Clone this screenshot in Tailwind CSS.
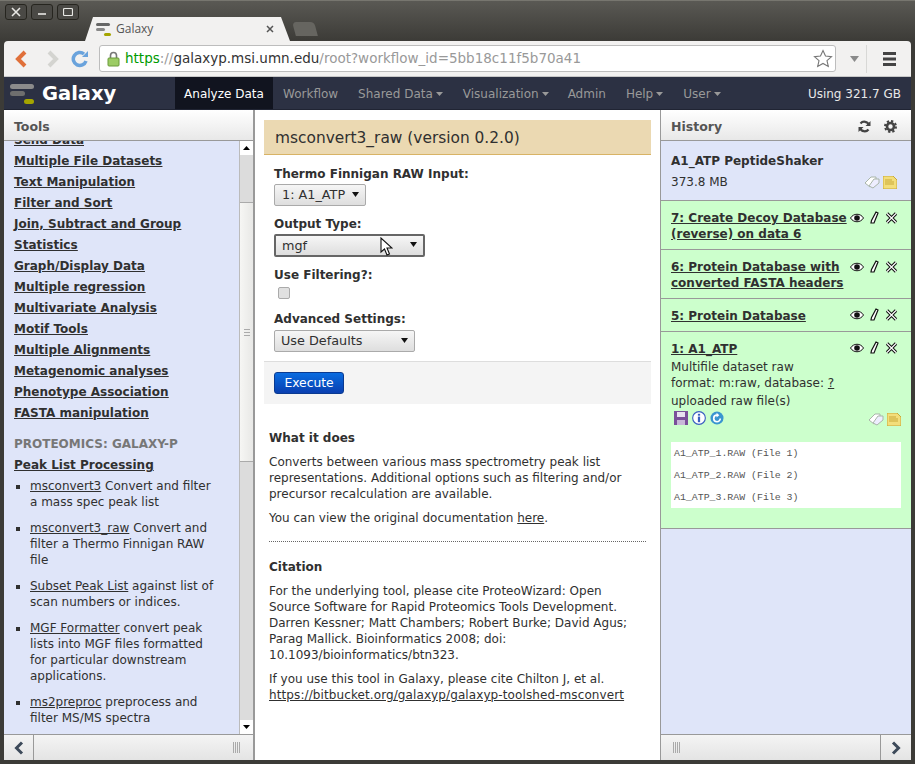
<!DOCTYPE html>
<html lang="en">
<head>
<meta charset="UTF-8"/>
<title>Galaxy</title>
<script src="https://cdn.jsdelivr.net/npm/@tailwindcss/browser@4"></script>
</head>
<body class="font-['DejaVu_Sans',sans-serif] text-[#303030] overflow-hidden">
<div class="relative w-[915px] h-[764px] bg-[#3c3b37] flex flex-col overflow-hidden">

  <!-- window title bar + tabs -->
  <div class="h-[41px] shrink-0 flex items-start pl-[5px] pt-[3px] bg-gradient-to-b from-[#5a5954] to-[#3c3b37] border-t border-[#77766f]">
    <div class="flex gap-[4px]">
      <button class="w-[22px] h-[16px] rounded-[3px] border border-[#26251f] bg-[#4a4945] flex items-center justify-center">
        <svg width="10" height="10" viewBox="0 0 10 10"><path d="M1 1L9 9M9 1L1 9" stroke="#e8e8e4" stroke-width="1.6"/></svg>
      </button>
      <button class="w-[22px] h-[16px] rounded-[3px] border border-[#26251f] bg-[#4a4945] flex items-center justify-center">
        <svg width="10" height="10" viewBox="0 0 10 10"><path d="M1 7H9" stroke="#e8e8e4" stroke-width="1.6"/></svg>
      </button>
      <button class="w-[22px] h-[16px] rounded-[3px] border border-[#26251f] bg-[#4a4945] flex items-center justify-center">
        <svg width="10" height="10" viewBox="0 0 10 10"><rect x="0.5" y="1.5" width="9" height="7" rx="1" fill="none" stroke="#e8e8e4" stroke-width="1.2"/></svg>
      </button>
    </div>
    <div class="ml-[6px] mt-[13px] w-[205px] h-[24px] bg-[#f2f1f0] [clip-path:polygon(8px_0,calc(100%-9px)_0,100%_100%,0_100%)] flex items-center pl-[11px] pr-[16px] text-[12px] text-[#555] font-['Open_Sans',sans-serif]">
      <svg width="16" height="16" viewBox="0 0 16 16"><rect x="0" y="2" width="14" height="3" rx="1.500" fill="#666"/><rect x="0" y="7" width="9" height="3" rx="1.500" fill="#888"/><rect x="8" y="12" width="7" height="3" rx="1.500" fill="#a5a500"/></svg>
      <span class="ml-[4px]">Galaxy</span>
      <svg class="ml-auto" width="8" height="8" viewBox="0 0 8 8"><path d="M1 1L7 7M7 1L1 7" stroke="#555" stroke-width="1.5"/></svg>
    </div>
    <div class="ml-[4px] mt-[18px] w-[22px] h-[14px] bg-[#666560] rounded-t-[4px] skew-x-[15deg]"></div>
  </div>

  <!-- browser toolbar -->
  <div class="ml-[4px] mr-[4px] h-[36px] shrink-0 bg-[#f2f1f0] rounded-t-[4px] flex items-center pl-[10px] border-b border-[#c8c8c8]">
    <svg width="16" height="18" viewBox="0 0 16 18"><path d="M11 2L4 9L11 16" fill="none" stroke="#e0703a" stroke-width="4"/></svg>
    <svg class="ml-[14px]" width="16" height="18" viewBox="0 0 16 18"><path d="M5 2L12 9L5 16" fill="none" stroke="#d4d4d0" stroke-width="4"/></svg>
    <svg class="ml-[11px]" width="18" height="18" viewBox="0 0 18 18"><path d="M15 11A6.500 6.500 0 1 1 13 4" fill="none" stroke="#6aa3dc" stroke-width="3.500"/><path d="M11 7L17 7L17 1Z" fill="#6aa3dc"/></svg>
    <div class="ml-[10px] w-[737px] h-[27px] bg-white border border-[#bdbdbd] rounded-[3px] flex items-center pl-[7px] pr-[2px] text-[13.500px] whitespace-nowrap">
      <svg width="13" height="16" viewBox="0 0 13 16"><path d="M3.500 7V4.500a3 3 0 0 1 6 0V7" fill="none" stroke="#777" stroke-width="1.600"/><rect x="1" y="7" width="11" height="8" rx="1" fill="#9ccc65" stroke="#6a9a3a"/></svg>
      <span class="ml-[5px] text-[#009a00]">https</span><span class="text-[#999]">://</span><span class="text-[#333]">galaxyp.msi.umn.edu</span><span class="text-[#999]">/root?workflow_id=5bb18c11f5b70a41</span>
      <svg class="ml-auto" width="20" height="19" viewBox="0 0 20 19"><path d="M10 1.500L12.500 7L18.500 7.600L14 11.600L15.300 17.500L10 14.500L4.700 17.500L6 11.600L1.500 7.600L7.500 7Z" fill="#fff" stroke="#777" stroke-width="1.100"/></svg>
    </div>
    <svg class="ml-[14px]" width="9" height="6" viewBox="0 0 9 6"><path d="M0 0H9L4.500 6Z" fill="#8a8a8a"/></svg>
    <div class="ml-[7px] w-px h-[28px] bg-[#d8d8d6]"></div>
    <svg class="ml-[16px]" width="13" height="14" viewBox="0 0 13 14"><path d="M0 0h13v3H0zM0 5.500h13v3H0zM0 11h13v3H0z" fill="#444"/></svg>
  </div>

  <div class="ml-[4px] mr-[4px] h-[647px] flex-1 flex flex-col bg-white min-h-0 overflow-hidden">
    <!-- masthead -->
    <nav class="h-[33px] shrink-0 bg-[#2c3143] flex items-stretch text-[12px] pt-px text-[#999] border-b border-[#202433]">
      <div class="w-[171px] flex items-center pl-[6px]">
        <svg width="25" height="23" viewBox="0 0 25 23"><rect x="0" y="2" width="24" height="5" rx="2.500" fill="#8b8b8b"/><rect x="0" y="9" width="15" height="5" rx="2.500" fill="#6e6e6e"/><rect x="14" y="17" width="10" height="5" rx="2.500" fill="#a5a500"/></svg>
        <span class="ml-[7px] text-[19.500px] font-bold text-white">Galaxy</span>
      </div>
      <a class="w-[98px] -mt-px bg-[#11141f] text-white flex items-center justify-center pt-px">Analyze Data</a>
      <a class="ml-[10px] flex items-center">Workflow</a>
      <a class="ml-[20px] flex items-center">Shared Data<svg class="ml-[3px]" width="7" height="4" viewBox="0 0 7 4"><path d="M0 0H7L3.500 4Z" fill="#999"/></svg></a>
      <a class="ml-[20px] flex items-center">Visualization<svg class="ml-[3px]" width="7" height="4" viewBox="0 0 7 4"><path d="M0 0H7L3.500 4Z" fill="#999"/></svg></a>
      <a class="ml-[19px] flex items-center">Admin</a>
      <a class="ml-[20px] flex items-center">Help<svg class="ml-[3px]" width="7" height="4" viewBox="0 0 7 4"><path d="M0 0H7L3.500 4Z" fill="#999"/></svg></a>
      <a class="ml-[20px] flex items-center">User<svg class="ml-[3px]" width="7" height="4" viewBox="0 0 7 4"><path d="M0 0H7L3.500 4Z" fill="#999"/></svg></a>
      <span class="ml-auto mr-[10px] flex items-center text-[#e8e8e8]">Using 321.7 GB</span>
    </nav>

    <div class="flex flex-1 min-h-0 text-[12px] leading-[16px]">
      <!-- tools panel -->
      <aside class="w-[251px] shrink-0 flex flex-col border-r-2 border-[#999]">
        <div class="h-[31px] shrink-0 bg-gradient-to-b from-white to-[#e8e8e8] border-b border-[#999] flex items-center pl-[10px] pt-[3px] text-[12.500px] font-bold text-[#555]">Tools</div>
        <div class="flex-1 min-h-0 flex bg-[#dfe5f9]">
          <div class="flex-1 min-w-0 overflow-hidden pl-[10px] pr-[19px]">
            <div class="-mt-[9px] flex flex-col font-bold gap-[5px] underline whitespace-nowrap">
              <a>Send Data</a>
              <a>Multiple File Datasets</a>
              <a>Text Manipulation</a>
              <a>Filter and Sort</a>
              <a>Join, Subtract and Group</a>
              <a>Statistics</a>
              <a>Graph/Display Data</a>
              <a>Multiple regression</a>
              <a>Multivariate Analysis</a>
              <a>Motif Tools</a>
              <a>Multiple Alignments</a>
              <a>Metagenomic analyses</a>
              <a>Phenotype Association</a>
              <a>FASTA manipulation</a>
            </div>
            <div class="mt-[15px] font-bold text-[#777]">PROTEOMICS: GALAXY-P</div>
            <a class="block mt-[5px] font-bold underline">Peak List Processing</a>
            <ul class="mt-[5px] flex flex-col gap-[10px] list-[square] pl-[16px]">
              <li><a class="underline">msconvert3</a> Convert and filter a mass spec peak list</li>
              <li><a class="underline">msconvert3_raw</a> Convert and filter a Thermo Finnigan RAW file</li>
              <li><a class="underline">Subset Peak List</a> against list of scan numbers or indices.</li>
              <li><a class="underline">MGF Formatter</a> convert peak lists into MGF files formatted for particular downstream applications.</li>
              <li><a class="underline">ms2preproc</a> preprocess and filter MS/MS spectra</li>
            </ul>
          </div>
          <!-- scrollbar -->
          <div class="w-[14px] shrink-0 flex flex-col bg-[#dcdcdc] border-l border-[#bbb]">
            <div class="h-[14px] bg-white flex items-center justify-center"><svg width="7" height="4" viewBox="0 0 7 4"><path d="M0 4H7L3.500 0Z" fill="#000"/></svg></div>
            <div class="h-[47px]"></div>
            <div class="h-[260px] bg-gradient-to-r from-[#f6f6f4] to-[#e8e8e6] border-y border-[#aaa] flex items-center justify-center">
              <svg width="6" height="7" viewBox="0 0 6 7"><path d="M0 .5H6M0 3.500H6M0 6.500H6" stroke="#aaa"/></svg>
            </div>
            <div class="flex-1"></div>
            <div class="h-[14px] bg-white flex items-center justify-center"><svg width="7" height="4" viewBox="0 0 7 4"><path d="M0 0H7L3.500 4Z" fill="#000"/></svg></div>
          </div>
        </div>
        <div class="h-[26px] shrink-0 flex bg-gradient-to-b from-[#f4f4f4] to-[#e4e4e4] border-t border-[#999]">
          <div class="w-[30px] flex items-center justify-center border-r border-[#999]">
            <svg width="10" height="14" viewBox="0 0 10 14"><path d="M8 1.500L2.500 7L8 12.500" fill="none" stroke="#3d4a5a" stroke-width="3"/></svg>
          </div>
          <div class="flex-1 flex items-center justify-end pr-[12px]"><svg width="8" height="11" viewBox="0 0 8 11"><path d="M.5 0V11M2.500 0V11M4.500 0V11M6.500 0V11" stroke="#aaa"/></svg></div>
        </div>
      </aside>

      <!-- center panel -->
      <main class="flex-1 min-w-0 pl-[9px] pr-[9px] pt-[10px] bg-white border-r border-[#999]">
        <h1 class="h-[35px] bg-[#ebd9b2] border-b border-[#d8b365] pl-[11px] pt-[2px] flex items-center text-[15.400px]">msconvert3_raw (version 0.2.0)</h1>
        <form class="pl-[10px] pt-[11px]">
          <label class="block font-bold">Thermo Finnigan RAW Input:</label>
          <div class="relative mt-[2px] w-[92px] h-[22px]">
            <select class="w-full h-full appearance-none rounded-[2px] border border-[#aaa] bg-gradient-to-b from-[#f6f6f6] to-[#dedede] pl-[7px] text-[12.800px]"><option>1: A1_ATP</option></select>
            <svg class="absolute right-[7px] top-[8px]" width="7" height="5" viewBox="0 0 7 5"><path d="M0 0H7L3.500 5Z" fill="#111"/></svg>
          </div>
          <label class="block font-bold mt-[10px]">Output Type:</label>
          <div class="relative mt-[2px] w-[151px] h-[23px]">
            <select class="w-full h-full appearance-none rounded-[2px] border-2 border-[#666] bg-gradient-to-b from-[#f6f6f6] to-[#dedede] pl-[6px] text-[12.800px]"><option>mgf</option></select>
            <svg class="absolute right-[8px] top-[8px]" width="7" height="5" viewBox="0 0 7 5"><path d="M0 0H7L3.500 5Z" fill="#111"/></svg>
          </div>
          <label class="block font-bold mt-[10px]">Use Filtering?:</label>
          <div class="mt-[4px] pl-[4px] h-[12px]"><input type="checkbox" class="block w-[12px] h-[12px] appearance-none rounded-[2px] border border-[#aaa] bg-[#e0e0e0]"/></div>
          <label class="block font-bold mt-[12px]">Advanced Settings:</label>
          <div class="relative mt-[3px] w-[141px] h-[22px]">
            <select class="w-full h-full appearance-none rounded-[2px] border border-[#aaa] bg-gradient-to-b from-[#f6f6f6] to-[#dedede] pl-[6px] text-[12.800px]"><option>Use Defaults</option></select>
            <svg class="absolute right-[7px] top-[8px]" width="7" height="5" viewBox="0 0 7 5"><path d="M0 0H7L3.500 5Z" fill="#111"/></svg>
          </div>
        </form>
        <div class="mt-[9px] h-[43px] bg-[#f4f4f4] border-t border-[#ddd] pl-[10px] pt-[10px]">
          <button class="w-[70px] h-[22px] rounded-[3px] bg-gradient-to-b from-[#0a6ce0] to-[#0a3fb0] border border-[#0a3a90] text-white text-[12.300px]">Execute</button>
        </div>
        <div class="pl-[5px] pr-[5px]">
          <h2 class="mt-[26px] font-bold">What it does</h2>
          <p class="mt-[8px]">Converts between various mass spectrometry peak list representations. Additional options such as filtering and/or precursor recalculation are available.</p>
          <p class="mt-[8px]">You can view the original documentation <a class="underline">here</a>.</p>
          <div class="mt-[15px] border-t border-dotted border-[#666]"></div>
          <h2 class="mt-[17px] font-bold">Citation</h2>
          <p class="mt-[8px]">For the underlying tool, please cite ProteoWizard: Open Source Software for Rapid Proteomics Tools Development. Darren Kessner; Matt Chambers; Robert Burke; David Agus; Parag Mallick. Bioinformatics 2008; doi: 10.1093/bioinformatics/btn323.</p>
          <p class="mt-[8px]">If you use this tool in Galaxy, please cite Chilton J, et al. <a class="underline tracking-[0.1px]">https://bitbucket.org/galaxyp/galaxyp-toolshed-msconvert</a></p>
        </div>
      </main>

      <!-- history panel -->
      <aside class="w-[250px] shrink-0 flex flex-col">
        <div class="h-[31px] shrink-0 bg-gradient-to-b from-white to-[#e8e8e8] border-b border-[#999] flex items-center pl-[10px] pt-[3px] pr-[14px] text-[12.500px] font-bold text-[#555]">
          History
          <svg class="ml-auto" width="13" height="13" viewBox="0 0 13 13"><path d="M11 5A5 5 0 0 0 2.500 3.500M2 8A5 5 0 0 0 10.500 9.500" fill="none" stroke="#444" stroke-width="2.200"/><path d="M12.500 1V6H7.500ZM.5 12V7H5.500Z" fill="#444"/></svg>
          <svg class="ml-[13px]" width="13" height="13" viewBox="0 0 13 13"><circle cx="6.500" cy="6.500" r="3.500" fill="none" stroke="#444" stroke-width="2.600"/><circle cx="6.500" cy="6.500" r="5.500" fill="none" stroke="#444" stroke-width="2" stroke-dasharray="2.300 2"/></svg>
        </div>
        <div class="flex-1 min-h-0 bg-[#dfe5f9] flex flex-col">
          <div class="h-[60px] shrink-0 px-[10px] pt-[12px] relative border-b border-[#999]">
            <div class="font-bold">A1_ATP PeptideShaker</div>
            <div class="mt-[5px] flex items-center h-[16px]">373.8 MB
              <svg class="ml-auto" width="16" height="13" viewBox="0 0 16 13"><path d="M1 7L7 1H12V5L6 11Z" fill="#fff" stroke="#a9b5a9"/><path d="M5 10L10 3H15V7L9 12Z" fill="#eef" stroke="#a9b5a9"/></svg>
              <svg class="ml-[3px]" width="14" height="13" viewBox="0 0 14 13"><path d="M0 0H10L14 4V13H0Z" fill="#f3de7b" stroke="#c9a93a"/><path d="M2 4H9M2 6H11M2 8H11" stroke="#c9a93a"/></svg>
              <span class="w-[4px]"></span>
            </div>
          </div>
          <div class="h-[49px] shrink-0 bg-[#ccffcc] border-b border-[#999] pl-[10px] pt-[9px] flex items-start">
            <a class="font-bold underline w-[179px] shrink-0">7: Create Decoy Database (reverse) on data 6</a>
            <div class="flex items-center gap-[6px] pt-px">
              <svg width="14" height="10" viewBox="0 0 14 10"><path d="M.5 5C3.500 0 10.500 0 13.500 5C10.500 10 3.500 10 .5 5Z" fill="#fff" stroke="#111"/><circle cx="7" cy="5" r="2.800" fill="#111"/></svg>
              <svg width="9" height="13" viewBox="0 0 9 13"><path d="M6 1L8 2L4 12L1 12L1.500 9.500Z" fill="#fff" stroke="#111" stroke-width="1.200"/></svg>
              <svg width="13" height="12" viewBox="0 0 13 12"><path d="M2 1.500L11 10.500M11 1.500L2 10.500" stroke="#111" stroke-width="3.200"/><path d="M2 1.500L11 10.500M11 1.500L2 10.500" stroke="#fff" stroke-width="1.200"/></svg>
            </div>
          </div>
          <div class="h-[49px] shrink-0 bg-[#ccffcc] border-b border-[#999] pl-[10px] pt-[9px] flex items-start">
            <a class="font-bold underline w-[179px] shrink-0">6: Protein Database with converted FASTA headers</a>
            <div class="flex items-center gap-[6px] pt-px">
              <svg width="14" height="10" viewBox="0 0 14 10"><path d="M.5 5C3.500 0 10.500 0 13.500 5C10.500 10 3.500 10 .5 5Z" fill="#fff" stroke="#111"/><circle cx="7" cy="5" r="2.800" fill="#111"/></svg>
              <svg width="9" height="13" viewBox="0 0 9 13"><path d="M6 1L8 2L4 12L1 12L1.500 9.500Z" fill="#fff" stroke="#111" stroke-width="1.200"/></svg>
              <svg width="13" height="12" viewBox="0 0 13 12"><path d="M2 1.500L11 10.500M11 1.500L2 10.500" stroke="#111" stroke-width="3.200"/><path d="M2 1.500L11 10.500M11 1.500L2 10.500" stroke="#fff" stroke-width="1.200"/></svg>
            </div>
          </div>
          <div class="h-[33px] shrink-0 bg-[#ccffcc] border-b border-[#999] pl-[10px] pt-[9px] flex items-start">
            <a class="font-bold underline w-[179px] shrink-0">5: Protein Database</a>
            <div class="flex items-center gap-[6px]">
              <svg width="14" height="10" viewBox="0 0 14 10"><path d="M.5 5C3.500 0 10.500 0 13.500 5C10.500 10 3.500 10 .5 5Z" fill="#fff" stroke="#111"/><circle cx="7" cy="5" r="2.800" fill="#111"/></svg>
              <svg width="9" height="13" viewBox="0 0 9 13"><path d="M6 1L8 2L4 12L1 12L1.500 9.500Z" fill="#fff" stroke="#111" stroke-width="1.200"/></svg>
              <svg width="13" height="12" viewBox="0 0 13 12"><path d="M2 1.500L11 10.500M11 1.500L2 10.500" stroke="#111" stroke-width="3.200"/><path d="M2 1.500L11 10.500M11 1.500L2 10.500" stroke="#fff" stroke-width="1.200"/></svg>
            </div>
          </div>
          <div class="h-[197px] shrink-0 bg-[#ccffcc] border-b border-[#999] px-[10px] pt-[9px]">
            <div class="flex items-start">
              <a class="font-bold underline w-[179px] shrink-0">1: A1_ATP</a>
              <div class="flex items-center gap-[6px]">
                <svg width="14" height="10" viewBox="0 0 14 10"><path d="M.5 5C3.500 0 10.500 0 13.500 5C10.500 10 3.500 10 .5 5Z" fill="#fff" stroke="#111"/><circle cx="7" cy="5" r="2.800" fill="#111"/></svg>
                <svg width="9" height="13" viewBox="0 0 9 13"><path d="M6 1L8 2L4 12L1 12L1.500 9.500Z" fill="#fff" stroke="#111" stroke-width="1.200"/></svg>
                <svg width="13" height="12" viewBox="0 0 13 12"><path d="M2 1.500L11 10.500M11 1.500L2 10.500" stroke="#111" stroke-width="3.200"/><path d="M2 1.500L11 10.500M11 1.500L2 10.500" stroke="#fff" stroke-width="1.200"/></svg>
              </div>
            </div>
            <p class="mt-[2px]">Multifile dataset raw<br/>format: m:raw, database: <a class="underline">?</a></p>
            <p class="mt-[2px]">uploaded raw file(s)</p>
            <div class="mt-[1px] flex items-center h-[16px] pl-[3px] gap-[4px]">
              <svg width="14" height="14" viewBox="0 0 14 14"><path d="M0 0H14V14H0Z" fill="#7a4f9a"/><rect x="3" y="1" width="8" height="5" fill="#e8e0f0"/><rect x="3" y="9" width="8" height="5" fill="#c8b8d8"/></svg>
              <svg width="14" height="14" viewBox="0 0 15 15"><circle cx="7.500" cy="7.500" r="6.800" fill="#fff" stroke="#3a5fc0" stroke-width="1.200"/><rect x="6.300" y="6" width="2.400" height="6" fill="#3a5fc0"/><rect x="6.300" y="3" width="2.400" height="2" fill="#3a5fc0"/></svg>
              <svg width="14" height="14" viewBox="0 0 15 15"><circle cx="7.500" cy="7.500" r="7" fill="#3a95d0"/><path d="M11 8A3.500 3.500 0 1 1 7.500 4.500" fill="none" stroke="#fff" stroke-width="1.800"/><path d="M7 2L10 4.500L7 7Z" fill="#fff"/></svg>
              <svg class="ml-auto mt-[3px]" width="16" height="13" viewBox="0 0 16 13"><path d="M1 7L7 1H12V5L6 11Z" fill="#fff" stroke="#a9b5a9"/><path d="M5 10L10 3H15V7L9 12Z" fill="#eef" stroke="#a9b5a9"/></svg>
              <svg class="-ml-[1px] mt-[3px]" width="14" height="13" viewBox="0 0 14 13"><path d="M0 0H10L14 4V13H0Z" fill="#f3de7b" stroke="#c9a93a"/><path d="M2 4H9M2 6H11M2 8H11" stroke="#c9a93a"/></svg>
            </div>
            <div class="mt-[16px] h-[66px] bg-white pl-[3px] pt-[5px] font-['Liberation_Mono',monospace] text-[9.900px] leading-[14px] text-[#555] flex flex-col gap-[8px]">
              <div>A1_ATP_1.RAW (File 1)</div>
              <div>A1_ATP_2.RAW (File 2)</div>
              <div>A1_ATP_3.RAW (File 3)</div>
            </div>
          </div>
        </div>
        <div class="h-[26px] shrink-0 flex bg-gradient-to-b from-[#f4f4f4] to-[#e4e4e4] border-t border-[#999]">
          <div class="flex-1 flex items-center pl-[12px]"><svg width="8" height="11" viewBox="0 0 8 11"><path d="M.5 0V11M2.500 0V11M4.500 0V11M6.500 0V11" stroke="#aaa"/></svg></div>
          <div class="w-[31px] flex items-center justify-center border-l border-[#999]">
            <svg width="10" height="14" viewBox="0 0 10 14"><path d="M2 1.500L7.500 7L2 12.500" fill="none" stroke="#3d4a5a" stroke-width="3"/></svg>
          </div>
        </div>
      </aside>
    </div>
  </div>
  <div class="h-[4px] shrink-0"></div>

  <!-- mouse pointer -->
  <svg class="absolute left-[380px] top-[237px]" width="13" height="20" viewBox="0 0 13 20"><path d="M1 1V15L4.500 12L7 18L9.500 17L7 11H12Z" fill="#fff" stroke="#111" stroke-width="1.100"/></svg>
</div>
</body>
</html>
